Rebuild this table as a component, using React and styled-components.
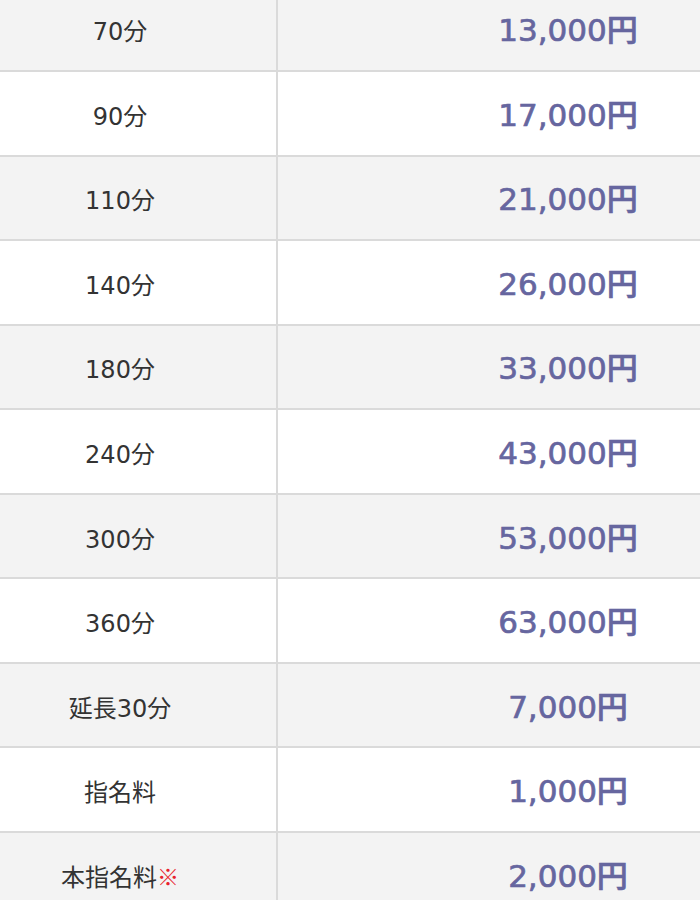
import React from 'react'
import styled, { createGlobalStyle } from 'styled-components'

const GlobalStyle = createGlobalStyle`
  html, body {
    margin: 0;
    padding: 0;
    background: #fff;
    overflow: hidden;
  }
  body {
    font-family: "DejaVu Sans", "Noto Sans CJK JP", sans-serif;
  }
`

const priceData = [
    { time: '70分', price: '13,000円' },
    { time: '90分', price: '17,000円' },
    { time: '110分', price: '21,000円' },
    { time: '140分', price: '26,000円' },
    { time: '180分', price: '33,000円' },
    { time: '240分', price: '43,000円' },
    { time: '300分', price: '53,000円' },
    { time: '360分', price: '63,000円' },
    { time: '延長30分', price: '7,000円' },
    { time: '指名料', price: '1,000円' },
    { time: '本指名料', price: '2,000円', note: true },
]

const PriceTable = styled.div`
    margin-top: -12.5px;
    display: grid;
    grid-template-columns: 278px 1fr;
`

const Row = styled.div`
    display: contents;
`

const Label = styled.div`
    height: 84.55px;
    box-sizing: border-box;
    display: flex;
    align-items: center;
    justify-content: center;
    padding-right: 36px;
    padding-top: 2px;
    background: ${({ shaded }) => (shaded ? '#f3f3f3' : '#fff')};
    border-bottom: 2px solid #dadada;
    border-right: 2px solid #dadada;
    color: #333;
    font-size: 24px;
    font-weight: 400;
`

const Price = styled.div`
    height: 84.55px;
    box-sizing: border-box;
    display: flex;
    align-items: center;
    justify-content: center;
    padding-left: 158px;
    padding-bottom: 2px;
    background: ${({ shaded }) => (shaded ? '#f3f3f3' : '#fff')};
    border-bottom: 2px solid #dadada;
    color: #66669f;
    font-size: 31px;
    font-weight: 500;
    -webkit-text-stroke: 0.7px #66669f;
`

const Mark = styled.span`
    color: #e8222c;
    font-family: "Noto Sans CJK JP", sans-serif;
    font-size: 22px;
`

const App = () => {
    return (
        <>
            <GlobalStyle />
            <PriceTable>
                {priceData.map((item, index) => {
                    const shaded = index % 2 === 0
                    return (
                        <Row key={index}>
                            <Label shaded={shaded}>
                                {item.time}
                                {item.note && <Mark>※</Mark>}
                            </Label>
                            <Price shaded={shaded}>{item.price}</Price>
                        </Row>
                    )
                })}
            </PriceTable>
        </>
    )
}

export default App
